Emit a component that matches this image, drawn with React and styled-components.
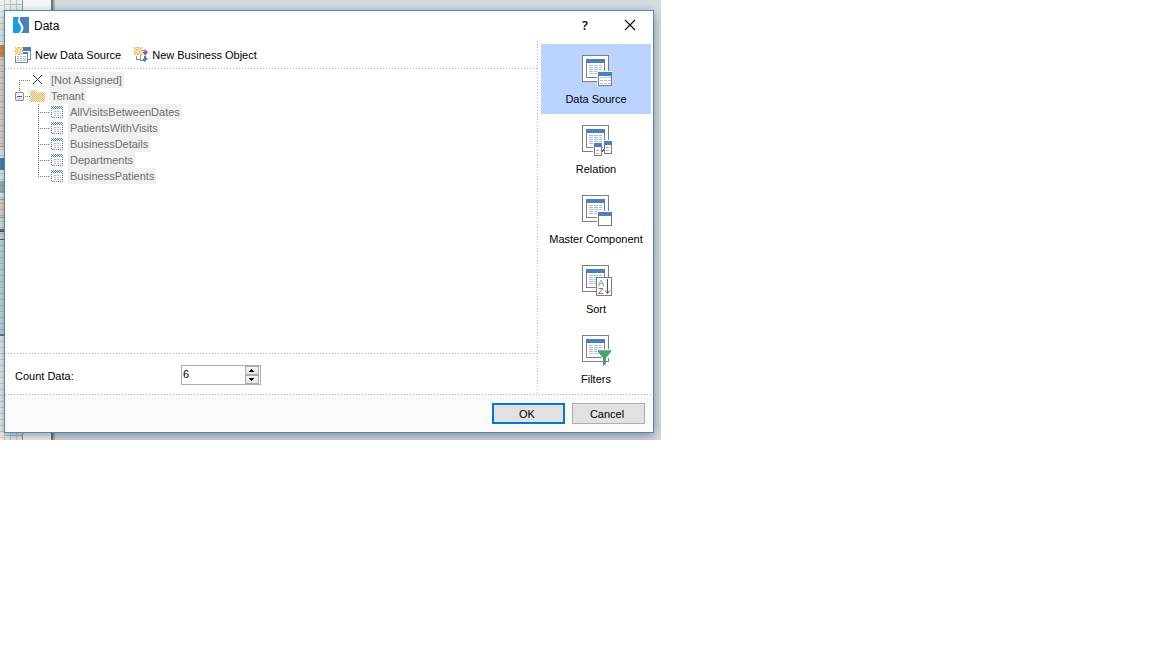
import React, { useState } from "react";
import styled, { createGlobalStyle, css } from "styled-components";

const GlobalStyle = createGlobalStyle`
  * { box-sizing: border-box; }
  body { margin: 0; background: #fff; font: 11px/16px "Liberation Sans", Arial, sans-serif; color: #000; }
  button, input { font: inherit; color: inherit; }
`;

const Designer = styled.main`
  width: calc(100% - 491px);
  min-width: 560px;
  padding: 10px 7px 7px 4px;
  background:
    linear-gradient(transparent 5px, rgba(110, 110, 110, 0.25) 5px) 0 0 / 4px 6px repeat-y,
    linear-gradient(
      #e9f3ef 45px, #dd9440 45px, #dd9440 57px, #e6dbcd 57px, #e6dbcd 146px, #e3a23f 146px, #e3a23f 147px,
      #f0f2f1 147px, #f0f2f1 158px, #4f83bd 158px, #4f83bd 170px, #f0f2f1 170px, #f0f2f1 181px,
      #a5b6cf 181px, #a5b6cf 193px, #f0f2f1 193px, #f0f2f1 199px, #c49b58 199px, #c49b58 200px,
      #e9dccb 200px, #e9dccb 217px, #c49b58 217px, #c49b58 218px, #dde8e9 218px, #dde8e9 229px,
      #4a78a8 229px, #4a78a8 231px, #555 231px, #555 232px, #ddd 232px, #ddd 239px, #555 239px, #555 240px,
      #c5dde5 240px, #c5dde5 334px, #4f83bd 334px, #4f83bd 336px, #f1f1f1 336px
    ) 0 0 / 4px 100% no-repeat,
    linear-gradient(#737578, #737578) 51px 0 / 2px 100% no-repeat,
    linear-gradient(#a9adb3, #a9adb3) 53px 0 / 2px 100% no-repeat,
    linear-gradient(#f7f7f7, #f7f7f7) 23px 0 / 28px 100% no-repeat,
    linear-gradient(#7fa08c, #7fa08c) 22px 0 / 1px 100% no-repeat,
    linear-gradient(#c2c9c5, #c2c9c5) 16px 0 / 1px 100% no-repeat,
    linear-gradient(#c2c9c5, #c2c9c5) 10px 0 / 1px 100% no-repeat,
    linear-gradient(#c2c9c5, #c2c9c5) 4px 0 / 1px 100% no-repeat,
    linear-gradient(#b9c0bc, #b9c0bc) 0 4px / 22px 1px no-repeat,
    linear-gradient(#b9c0bc, #b9c0bc) 0 calc(100% - 4px) / 22px 1px no-repeat,
    linear-gradient(#e9f1ee, #e9f1ee) 0 0 / 23px 100% no-repeat,
    #d6dbe2;
  overflow: hidden;
`;

const Dialog = styled.section`
  border: 1px solid #3d8fbe;
  background: #fff;
  box-shadow: 0 3px 10px rgba(0, 0, 0, 0.38);
`;

const TitleBar = styled.header`
  display: flex;
  align-items: center;
  height: 30px;
  padding: 0 15px 2px 8px;
  gap: 5px;
`;

const Title = styled.h1`
  flex: 1;
  margin: 0;
  padding-top: 1px;
  font-size: 12px;
  line-height: 16px;
  font-weight: 400;
`;

const TitleButton = styled.button`
  display: grid;
  place-items: center;
  width: 16px;
  height: 16px;
  margin-left: 24px;
  padding: 0;
  border: 0;
  background: none;
  font-family: "Open Sans", "Liberation Sans", sans-serif;
  font-size: 13px;
  font-weight: 600;
`;

const Body = styled.div`
  display: flex;
`;

const dots = css`
  background-image: linear-gradient(90deg, #b0b0b0 1px, transparent 1px);
  background-size: 3px 1px;
  background-repeat: repeat-x;
`;

const Content = styled.div`
  display: flex;
  flex: 1;
  flex-direction: column;
`;

const Toolbar = styled.div`
  ${dots}
  background-position: 0 100%;
  display: flex;
  align-items: center;
  height: 28px;
  padding: 0 10px;
  gap: 13px;
`;

const ToolButton = styled.button`
  display: flex;
  align-items: center;
  gap: 4px;
  padding: 0;
  border: 0;
  background: none;
`;

const Tree = styled.ul`
  flex: 1;
  margin: 0;
  padding: 3px 10px;
  list-style: none;
  color: #6d6d6d;
`;

const SubTree = styled.ul`
  margin: 0;
  padding: 0 0 0 23px;
  list-style: none;
`;

const TreeRow = styled.div`
  display: flex;
  align-items: center;
  height: 16px;
`;

const TreeLabel = styled.span`
  margin-left: 4px;
  padding: 0 2px;
  background: #f0f0f0;
`;

const Elbow = styled.span`
  align-self: flex-end;
  width: 11px;
  height: 12px;
  margin: 0 0 -4px 4px;
  background:
    linear-gradient(#777 1px, transparent 1px) 0 0 / 1px 2px repeat-y,
    linear-gradient(90deg, #777 1px, transparent 1px) 0 0 / 2px 1px repeat-x;
`;

const Dash = styled.span`
  width: 6px;
  height: 1px;
  background: linear-gradient(90deg, transparent 1px, #777 1px) 0 0 / 2px 1px repeat-x;
`;

const Branch = styled.span`
  width: 12px;
  height: 16px;
  background:
    linear-gradient(#777 1px, transparent 1px) 0 0 / 1px 2px repeat-y,
    linear-gradient(90deg, #777 1px, transparent 1px) 0 8px / 2px 1px repeat-x;
  ${(p) => p.$last && css`
    align-self: flex-start;
    height: 9px;
  `}
`;

const Toggle = styled.button`
  display: grid;
  place-items: center;
  width: 9px;
  height: 9px;
  padding: 0;
  border: 1px solid #919191;
  border-radius: 1px;
  background: linear-gradient(#fff, #ddd);
`;

const CountRow = styled.div`
  ${dots}
  background-position: 0 0;
  display: flex;
  align-items: center;
  height: 41px;
  padding: 3px 10px 0;
`;

const CountLabel = styled.label`
  width: 166px;
  padding-top: 2px;
`;

const Spinner = styled.div`
  display: flex;
  width: 80px;
  height: 20px;
  border: 1px solid #abadb3;
`;

const CountInput = styled.input`
  flex: 1;
  min-width: 0;
  padding: 0 1px 2px;
  border: 0;
  outline: 0;
  background: none;
`;

const Steppers = styled.div`
  display: flex;
  flex-direction: column;
  width: 15px;
  padding-right: 1px;
`;

const Stepper = styled.button`
  display: grid;
  place-items: center;
  flex: 1;
  min-height: 0;
  padding: 0 1px 0 0;
  border: 1px solid #acacac;
  background: linear-gradient(#f4f4f4, #e4e4e4);
`;

const Sidebar = styled.nav`
  flex: none;
  width: 116px;
  padding: 3px 2px 0 4px;
  background: linear-gradient(#b8b8b8 1px, transparent 1px) 0 0 / 1px 3px repeat-y;
`;

const SideButton = styled.button`
  display: flex;
  flex-direction: column;
  align-items: center;
  width: 100%;
  height: 70px;
  padding: 10px 0 0;
  gap: 4px;
  border: 0;
  background: ${(p) => (p.$active ? "#bad3ff" : "none")};
`;

const Footer = styled.footer`
  ${dots}
  background-color: #fafafa;
  background-position: 0 0;
  display: flex;
  justify-content: flex-end;
  height: 38px;
  padding: 9px 8px 0;
  gap: 7px;
`;

const ActionButton = styled.button`
  width: 73px;
  height: 21px;
  padding: 0 3px 0 0;
  border: ${(p) => (p.$primary ? "2px solid #0078d7" : "1px solid #adadad")};
  background: #e1e1e1;
`;

const Icon = styled.svg`
  display: block;
  flex: none;
`;

const AxisLetter = styled.text`
  font: 9px "Liberation Sans", Arial, sans-serif;
`;

function Logo() {
  return (
    <Icon width="16" height="16" viewBox="0 0 16 16" aria-hidden="true">
      <path fill="#159fe6" d="M0 0H6C4 3 5 5 7 8C9 11 8 13 6 16H0z" />
      <path fill="#4a7fbd" d="M7 0H16V16H8C11 13 11 10 9 7C7 4 6 3 7 0z" />
    </Icon>
  );
}

function Burst() {
  return (
    <g shapeRendering="crispEdges">
      <path fill="#fbe3b8" d="M0 0h8v8H0z" />
      <path fill="#ecb457" d="M0 0h1v1H0zM3 0h2v1H3zM7 0h1v1H7zM1 1h1v1H1zM6 1h1v1H6zM0 3h1v2H0zM7 3h1v2H7zM1 6h1v1H1zM6 6h1v1H6zM0 7h1v1H0zM3 7h2v1H3zM7 7h1v1H7z" />
      <path fill="#f4c67b" d="M2 2h4v4H2z" />
      <path fill="#fff3da" d="M3 3h2v2H3z" />
    </g>
  );
}

function NewSourceIcon() {
  return (
    <Icon width="16" height="16" viewBox="0 0 16 16" shapeRendering="crispEdges" aria-hidden="true">
      <path fill="#858585" d="M15 4h1v9h-3v-1h2z" />
      <path fill="#4a7fb8" d="M8 0h8v4H8z" />
      <path fill="#fff" d="M0 5h13v11H0z" />
      <path fill="#4a7fb8" d="M8 5h5v2H8z" />
      <path fill="#858585" d="M0 9h1v6h11V7h1v9H0z" />
      <path fill="#9fbbdb" d="M2 9h2v1H2zM5 9h2v1H5zM8 9h3v1H8zM2 11h2v1H2zM5 11h2v1H5zM8 11h3v1H8zM2 13h2v1H2zM5 13h2v1H5zM8 13h3v1H8z" />
      <Burst />
    </Icon>
  );
}

function NewObjectIcon() {
  return (
    <Icon width="14" height="16" viewBox="0 0 14 16" aria-hidden="true">
      <path fill="none" stroke="#8a8a8a" shapeRendering="crispEdges" d="M8 3.500h2M2.500 9v3H6M6.500 8v5.500H9" />
      <path fill="#8e5bae" d="M11 2l3 3.500-3 3.500-1-2-2-1.500 2-1z" />
      <path fill="#4a7fb8" d="M10 9h2v2h2l-3 4-3-2 2-2z" />
      <Burst />
    </Icon>
  );
}

function CloseIcon() {
  return (
    <Icon width="12" height="12" viewBox="0 0 12 12" aria-hidden="true">
      <path stroke="#000" strokeWidth="1.1" d="M1 1l10 10M11 1L1 11" />
    </Icon>
  );
}

function NoneIcon() {
  return (
    <Icon width="15" height="16" viewBox="0 0 15 16" aria-hidden="true">
      <path stroke="#333" d="M3 3l9 9M12 3l-9 9" />
    </Icon>
  );
}

function Folder() {
  return (
    <Icon width="15" height="16" viewBox="0 0 15 16" shapeRendering="crispEdges" aria-hidden="true">
      <defs>
        <pattern id="weave" width="2" height="2" patternUnits="userSpaceOnUse">
          <path fill="#fdf3e0" d="M0 0h2v2H0z" />
          <path fill="#e6b25a" d="M0 0h1v1H0zM1 1h1v1H1z" />
        </pattern>
      </defs>
      <path fill="url(#weave)" d="M0 3h1V2h5v1h1v1h7v1h1v9H0z" />
    </Icon>
  );
}

function TableIcon() {
  return (
    <Icon width="14" height="16" viewBox="0 0 14 16" shapeRendering="crispEdges" aria-hidden="true">
      <defs>
        <pattern id="header" width="2" height="2" patternUnits="userSpaceOnUse">
          <path fill="#3f7cb4" d="M1 0h1v1H1zM0 1h1v1H0z" />
        </pattern>
      </defs>
      <path fill="url(#header)" d="M1 2h12v3H1z" />
      <path fill="none" stroke="#777" strokeDasharray="1 1" d="M1.500 6v7.500h11V5" />
      <path stroke="#9fc0e2" strokeDasharray="2 1" d="M4 7.500h7M4 9.500h7M4 11.500h7" />
    </Icon>
  );
}

function MiniWindow({ x, y, w, h, lines }) {
  return (
    <g>
      <rect x={x - 1} y={y - 1} width={w + 1} height={h + 1} fill="#fff" />
      <rect x={x} y={y} width={w} height={h} fill="#7b7b7b" />
      <rect x={x + 1} y={y + 4} width={w - 2} height={h - 5} fill="#fff" />
      <rect x={x} y={y} width={w} height="4" fill="#4a80bb" />
      {lines && <path stroke="#a5bfe0" strokeDasharray="3 1" d={lines} />}
    </g>
  );
}

const overlays = {
  "Data Source": <MiniWindow x={16} y={17} w={14} h={14} lines="M18 22.500h11M18 25.500h11M18 28.500h11" />,
  Relation: (
    <g>
      <MiniWindow x={22} y={16} w={8} h={13} lines="M24 22.500h4M24 25.500h4" />
      <MiniWindow x={12} y={18} w={8} h={13} lines="M14 25.500h4M14 28.500h4" />
      <path fill="#555" d="M20 25h1v-1h1v2h-1v1h-1z" />
    </g>
  ),
  "Master Component": <MiniWindow x={16} y={17} w={14} h={14} />,
  Sort: (
    <g>
      <path fill="#fff" stroke="#7b7b7b" d="M14.500 12.500h15v18h-15z" />
      <AxisLetter x="16" y="21" fill="#3f78b5">A</AxisLetter>
      <AxisLetter x="16" y="29" fill="#8a4fa8">Z</AxisLetter>
      <path fill="none" stroke="#555" shapeRendering="auto" d="M25.500 14v14M23 25.500l2.500 3 2.500-3" />
    </g>
  ),
  Filters: (
    <g shapeRendering="auto">
      <path fill="#fff" d="M15 14h12v9H20z" />
      <path fill="#4ca273" d="M16 15h13v2l-5 6v6l-3 2v-8l-5-6z" />
      <path fill="#74bb93" d="M17 15h11v1H17z" />
    </g>
  ),
};

function SheetIcon({ kind }) {
  return (
    <Icon width="32" height="33" viewBox="-2 -1 32 33" shapeRendering="crispEdges" aria-hidden="true">
      <path fill="#fff" stroke="#7f7f7f" d="M.5.5h26v26H.5z" />
      <path fill="#fff" stroke="#7f7f7f" d="M4.500 4.500h18v18h-18z" />
      <path fill="#4a80bb" d="M4 4h19v4H4z" />
      <path stroke="#a5bfe0" strokeDasharray="4 1" d="M7 10.500h13M7 12.500h13M7 14.500h13M7 16.500h13M7 18.500h13" />
      {overlays[kind]}
    </Icon>
  );
}

const sources = ["AllVisitsBetweenDates", "PatientsWithVisits", "BusinessDetails", "Departments", "BusinessPatients"];

export default function App() {
  const [count, setCount] = useState(6);
  const [open, setOpen] = useState(true);
  const [page, setPage] = useState("Data Source");

  return (
    <Designer>
      <GlobalStyle />
      <Dialog role="dialog" aria-labelledby="dialog-title">
        <TitleBar>
          <Logo />
          <Title id="dialog-title">Data</Title>
          <TitleButton type="button">?</TitleButton>
          <TitleButton type="button" aria-label="Close"><CloseIcon /></TitleButton>
        </TitleBar>
        <Body>
          <Content>
            <Toolbar>
              <ToolButton type="button"><NewSourceIcon />New Data Source</ToolButton>
              <ToolButton type="button"><NewObjectIcon />New Business Object</ToolButton>
            </Toolbar>
            <Tree>
              <li>
                <TreeRow><Elbow /><NoneIcon /><TreeLabel>[Not Assigned]</TreeLabel></TreeRow>
              </li>
              <li>
                <TreeRow>
                  <Toggle type="button" aria-label="Toggle Tenant" aria-expanded={open} onClick={() => setOpen(!open)}>
                    <Icon width="5" height="5" shapeRendering="crispEdges" aria-hidden="true">
                      <path fill="#3a5fa8" d={open ? "M0 2h5v1H0z" : "M0 2h5v1H0zM2 0h1v5H2z"} />
                    </Icon>
                  </Toggle>
                  <Dash /><Folder /><TreeLabel>Tenant</TreeLabel>
                </TreeRow>
                {open && (
                  <SubTree>
                    {sources.map((name, i) => (
                      <li key={name}>
                        <TreeRow>
                          <Branch $last={i === sources.length - 1} />
                          <TableIcon />
                          <TreeLabel>{name}</TreeLabel>
                        </TreeRow>
                      </li>
                    ))}
                  </SubTree>
                )}
              </li>
            </Tree>
            <CountRow>
              <CountLabel htmlFor="count">Count Data:</CountLabel>
              <Spinner>
                <CountInput id="count" inputMode="numeric" value={count} onChange={(e) => setCount(Number(e.target.value) || 0)} />
                <Steppers>
                  <Stepper type="button" aria-label="Increase" onClick={() => setCount(count + 1)}>
                    <Icon width="5" height="3" shapeRendering="crispEdges" aria-hidden="true"><path d="M2 0h1v1h1v1h1v1H0V2h1V1h1z" /></Icon>
                  </Stepper>
                  <Stepper type="button" aria-label="Decrease" onClick={() => setCount(Math.max(0, count - 1))}>
                    <Icon width="5" height="3" shapeRendering="crispEdges" aria-hidden="true"><path d="M0 0h5v1H4v1H3v1H2V2H1V1H0z" /></Icon>
                  </Stepper>
                </Steppers>
              </Spinner>
            </CountRow>
          </Content>
          <Sidebar>
            {Object.keys(overlays).map((name) => (
              <SideButton key={name} type="button" $active={name === page} onClick={() => setPage(name)}>
                <SheetIcon kind={name} />
                {name}
              </SideButton>
            ))}
          </Sidebar>
        </Body>
        <Footer>
          <ActionButton type="button" $primary>OK</ActionButton>
          <ActionButton type="button">Cancel</ActionButton>
        </Footer>
      </Dialog>
    </Designer>
  );
}
